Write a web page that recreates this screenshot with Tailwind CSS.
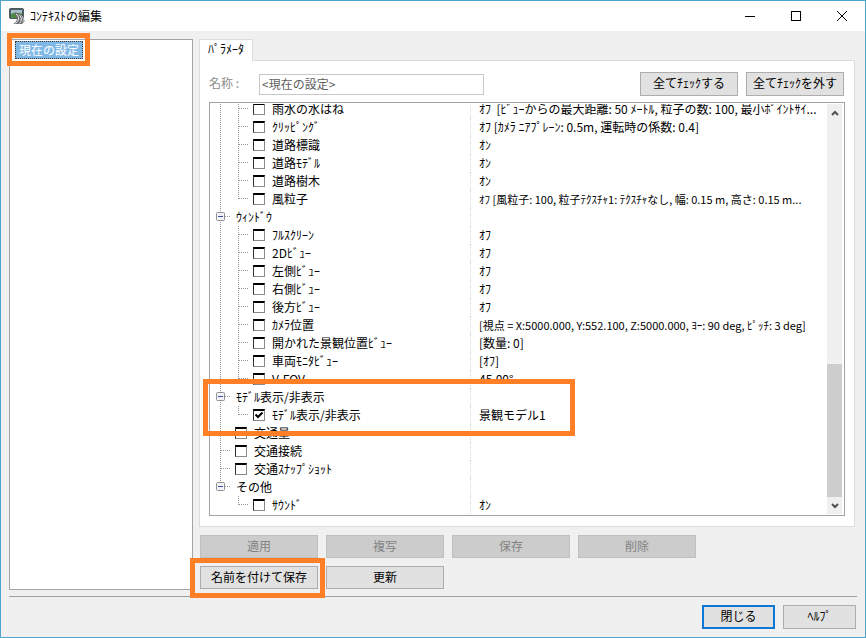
<!DOCTYPE html>
<html lang="ja">
<head>
  <meta charset="UTF-8" />
  <meta name="viewport" content="width=device-width, initial-scale=1.0"/>
  <title>コンテキストの編集</title>
  <script src="https://cdn.jsdelivr.net/npm/@tailwindcss/browser@4"></script>
</head>
<body class="h-screen flex flex-col overflow-hidden border border-[#4ea6cf] bg-[#f0f0f0] font-['Noto_Sans_CJK_JP',sans-serif] text-xs text-black">

  <!-- Title bar -->
  <header class="flex h-[30px] shrink-0 items-center bg-white pb-px pl-2">
    <svg class="size-4" viewBox="0 0 16 16">
      <rect x="0.5" y="0.5" width="14" height="10" rx="1" fill="#4b5a60" stroke="#4f5c60"/>
      <path d="M2 2h11v4H2z" fill="#a9bfca"/>
      <path d="M2 6l4-1.500 7 1V10H2z" fill="#4c8a45"/>
      <path d="M5 5c6-1 10 3 10.500 8.500L13 16H4c4-2 6-6 1-11z" fill="#6a6d70"/>
      <path d="M7 6c4 3 3 7-.5 9.500M10 6.500c3 3 3 6 .5 9" stroke="#f2f2f2" fill="none"/>
      <path d="M12.500 7.500c2 2 2.500 4 1.500 7" stroke="#c4c6c8" fill="none"/>
    </svg>
    <h1 class="ml-[5px] flex-1">ｺﾝﾃｷｽﾄの編集</h1>
    <button aria-label="最小化" class="flex h-full w-[46px] items-center justify-center">
      <svg class="size-3" viewBox="0 0 12 12" stroke="#000" fill="none"><path d="M1 6.500h10"/></svg>
    </button>
    <button aria-label="最大化" class="flex h-full w-[46px] items-center justify-center">
      <svg class="size-3" viewBox="0 0 12 12" stroke="#000" fill="none"><rect x="1.500" y="1.500" width="9" height="9"/></svg>
    </button>
    <button aria-label="閉じる" class="flex h-full w-[46px] items-center justify-center">
      <svg class="size-3" viewBox="0 0 12 12" stroke="#000" fill="none"><path d="M1 1l10 10M11 1L1 11"/></svg>
    </button>
  </header>

  <main class="flex min-h-0 flex-1 pt-2 pl-2 pr-[10px]">

    <!-- Context list -->
    <nav class="mb-[6px] w-[184px] shrink-0 border border-[#a0a4a8] bg-white pt-px pl-[5px]">
      <div class="relative w-fit">
        <button class="block h-[18px] border border-dotted border-[#40342c] bg-[#80b8e6] px-[3px] leading-[14px] text-white">現在の設定</button>
        <div class="pointer-events-none absolute -right-[7px] -left-2 -top-2 -bottom-[7px] border-[5px] border-[#ff7f27]"></div>
      </div>
    </nav>

    <section class="ml-[6px] flex min-w-0 flex-1 flex-col">
      <button class="z-10 -mb-px h-[22px] w-[54px] shrink-0 border border-b-0 border-[#dcdcdc] bg-white pb-1">ﾊﾟﾗﾒｰﾀ</button>

      <div class="flex min-h-0 flex-1 flex-col border border-[#dcdcdc] bg-white px-[9px] pt-[11px] pb-[10px]">
        <div class="flex h-6 shrink-0 items-center pr-px">
          <label for="name" class="w-[50px] pb-[2px] text-[#8c8c8c]">名称 :</label>
          <input id="name" type="text" value="&lt;現在の設定&gt;" class="h-[21px] w-[225px] border border-[#c8c8c8] bg-white px-[2px] pb-[2px] text-[#606060]" />
          <button class="ml-auto h-6 w-[98px] border border-[#adadad] bg-[#e1e1e1] pb-[2px]">全てﾁｪｯｸする</button>
          <button class="ml-2 h-6 w-[98px] border border-[#adadad] bg-[#e1e1e1] pb-[2px]">全てﾁｪｯｸを外す</button>
        </div>

        <!-- Parameter tree -->
        <div class="relative mt-[6px] flex min-h-0 flex-1 border border-[#a0a4a8] p-px">
          <div class="min-w-0 flex-1 overflow-hidden">
            <ul id="tree" class="-mt-1"></ul>
          </div>
          <div class="mr-px flex w-[15px] shrink-0 flex-col bg-[#f0f0f0]">
            <button aria-label="上へ" class="flex h-[17px] items-center justify-center">
              <svg class="h-[6px] w-2" viewBox="0 0 8 6" fill="none" stroke="#505050" stroke-width="2"><path d="M1 5l3-3 3 3"/></svg>
            </button>
            <div class="flex flex-1 flex-col">
              <div class="grow-[64]"></div>
              <div class="grow-[35] bg-[#cdcdcd]"></div>
            </div>
            <button aria-label="下へ" class="flex h-[17px] items-center justify-center">
              <svg class="h-[6px] w-2" viewBox="0 0 8 6" fill="none" stroke="#505050" stroke-width="2"><path d="M1 1l3 3 3-3"/></svg>
            </button>
          </div>
          <div class="pointer-events-none absolute -left-[7px] top-[276px] h-[57px] w-[372px] border-[5px] border-[#ff7f27]"></div>
        </div>
      </div>

      <div class="mt-2 grid w-fit shrink-0 grid-cols-[repeat(4,118px)] gap-2 pb-[7px] pl-px">
        <button disabled class="h-[23px] border border-[#bfbfbf] bg-[#cccccc] pb-[2px] text-[#838383]">適用</button>
        <button disabled class="h-[23px] border border-[#bfbfbf] bg-[#cccccc] pb-[2px] text-[#838383]">複写</button>
        <button disabled class="h-[23px] border border-[#bfbfbf] bg-[#cccccc] pb-[2px] text-[#838383]">保存</button>
        <button disabled class="h-[23px] border border-[#bfbfbf] bg-[#cccccc] pb-[2px] text-[#838383]">削除</button>
        <div class="relative">
          <button class="h-[23px] w-full border border-[#adadad] bg-[#e1e1e1] pb-[2px]">名前を付けて保存</button>
          <div class="pointer-events-none absolute -top-2 -bottom-[9px] -left-[10px] -right-[7px] border-[5px] border-[#ff7f27]"></div>
        </div>
        <button class="h-[23px] border border-[#adadad] bg-[#e1e1e1] pb-[2px]">更新</button>
      </div>
    </section>
  </main>

  <footer class="mx-2 flex shrink-0 justify-end gap-2 border-t border-[#a0a0a0] pt-2 pr-px pb-2">
    <button class="h-6 w-[73px] border-2 border-[#0f78d4] bg-[#e1e1e1] pb-[2px]">閉じる</button>
    <button class="h-6 w-[73px] border border-[#adadad] bg-[#e1e1e1] pb-[2px]">ﾍﾙﾌﾟ</button>
  </footer>

  <script>
    // cells: v = line, t = branch, l = last branch, m / e = expander (e closes the trunk), _ = blank
    const rows = [
      ["vt", "雨水の水はね", "ｵﾌ  [ﾋﾞｭｰからの最大距離: 50 ﾒｰﾄﾙ, 粒子の数: 100, 最小ﾎﾟｲﾝﾄｻｲ..."],
      ["vt", "ｸﾘｯﾋﾟﾝｸﾞ", "ｵﾌ [ｶﾒﾗ ﾆｱﾌﾟﾚｰﾝ: 0.5m, 運転時の係数: 0.4]"],
      ["vt", "道路標識", "ｵﾝ"],
      ["vt", "道路ﾓﾃﾞﾙ", "ｵﾝ"],
      ["vt", "道路樹木", "ｵﾝ"],
      ["vl", "風粒子", "ｵﾌ [風粒子: 100, 粒子ﾃｸｽﾁｬ1: ﾃｸｽﾁｬなし, 幅: 0.15 m, 高さ: 0.15 m..."],
      ["m", "ｳｨﾝﾄﾞｳ", ""],
      ["vt", "ﾌﾙｽｸﾘｰﾝ", "ｵﾌ"],
      ["vt", "2Dﾋﾞｭｰ", "ｵﾌ"],
      ["vt", "左側ﾋﾞｭｰ", "ｵﾌ"],
      ["vt", "右側ﾋﾞｭｰ", "ｵﾌ"],
      ["vt", "後方ﾋﾞｭｰ", "ｵﾌ"],
      ["vt", "ｶﾒﾗ位置", "[視点 = X:5000.000, Y:552.100, Z:5000.000, ﾖｰ: 90 deg, ﾋﾟｯﾁ: 3 deg]"],
      ["vt", "開かれた景観位置ﾋﾞｭｰ", "[数量: 0]"],
      ["vt", "車両ﾓﾆﾀﾋﾞｭｰ", "[ｵﾌ]"],
      ["vl", "V-FOV", "45.00°"],
      ["m", "ﾓﾃﾞﾙ表示/非表示", ""],
      ["vl", "ﾓﾃﾞﾙ表示/非表示", "景観モデル1", true],
      ["t", "交通量", ""],
      ["t", "交通接続", ""],
      ["t", "交通ｽﾅｯﾌﾟｼｮｯﾄ", ""],
      ["e", "その他", ""],
      ["_l", "ｻｳﾝﾄﾞ", "ｵﾝ"],
    ];

    const box = '<rect x="4.5" y="4.5" width="8" height="8" rx="1" fill="#f1f3f8" stroke="#919191" stroke-dasharray="none"/><path d="M6 8.5h5" stroke="#3c50a0" stroke-dasharray="none"/>';
    const lines = {
      v: '<path d="M8.5 0v18"/>',
      t: '<path d="M8.5 0v18M9 8.5h9"/>',
      l: '<path d="M8.5 0v9M9 8.5h9"/>',
      m: '<path d="M8.5 0v18M13 8.5h5"/>' + box,
      e: '<path d="M8.5 0v9M13 8.5h5"/>' + box,
      _: "",
    };

    function cell(kind) {
      return `<svg class="size-[18px] shrink-0" viewBox="0 0 18 18" fill="none" stroke="#989898" stroke-dasharray="1 1">${lines[kind]}</svg>`;
    }

    function checkbox(i, checked) {
      return `<span class="relative ml-[5px] size-3 shrink-0">
        <input id="p${i}" type="checkbox" ${checked ? "checked" : ""} class="peer block size-3 appearance-none border border-t-2 border-[#8a8a8a] border-t-black border-l-[#303030] bg-white" />
        <svg class="pointer-events-none absolute inset-0 hidden size-3 peer-checked:block" viewBox="0 0 12 12" fill="none" stroke="#000" stroke-width="2"><path d="M2.500 5.500L5 8l4.500-4.500"/></svg>
      </span>`;
    }

    document.getElementById("tree").innerHTML = rows.map(([cells, name, value, checked], i) => {
      const group = cells === "m" || cells === "e";
      const label = group
        ? `<span class="pl-[6px]">${name}</span>`
        : `${checkbox(i, checked)}<label for="p${i}" class="pl-[7px]">${name}</label>`;
      // long values with many digits get a smaller size so they fit the column
      const size = value.replace(/\D/g, "").length > 8 ? "text-[11px]" : "text-xs";
      return `<li class="flex h-[18px] leading-[18px]">
        <div class="flex w-[260px] shrink-0 items-center border-r border-dotted border-[#d8d8d8] pl-px">${[...cells].map(cell).join("")}${label}</div>
        <div class="min-w-0 flex-1 pl-2 whitespace-pre"><span class="${size} leading-[18px]">${value}</span></div>
      </li>`;
    }).join("");
  </script>
</body>
</html>
